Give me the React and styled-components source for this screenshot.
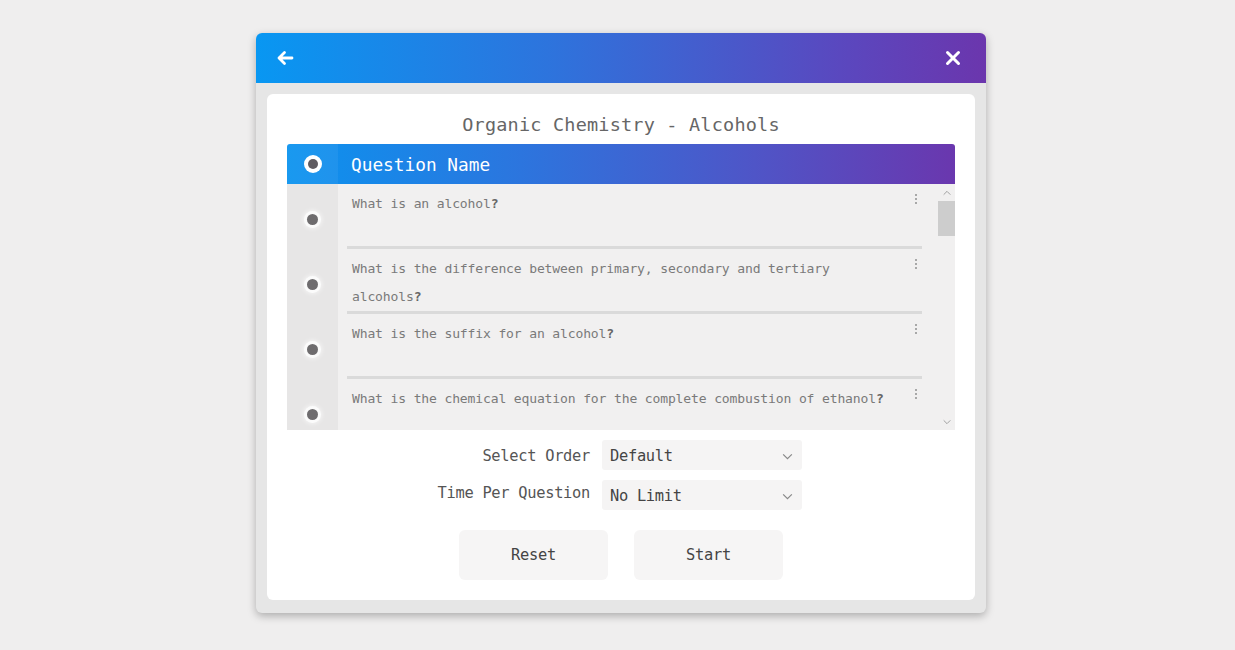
import React from "react";
import styled, { createGlobalStyle } from "styled-components";

const Global = createGlobalStyle`
  html, body { margin: 0; padding: 0; background: #efeeee; }
  body { font-family: "DejaVu Sans Mono", "Liberation Mono", monospace; }
  * { box-sizing: border-box; }
`;

const Page = styled.div`
  width: 1235px;
  height: 650px;
  display: flex;
  justify-content: center;
  padding: 33px 0 0 7px;
`;

const Window = styled.div`
  width: 730px;
  height: 580px;
  background: #e6e6e6;
  border-radius: 6px;
  box-shadow: 0 3px 8px rgba(0,0,0,0.28);
  display: flex;
  flex-direction: column;
  overflow: hidden;
`;

const TitleBar = styled.div`
  height: 50px;
  flex: none;
  background: linear-gradient(90deg, #0897f2 0%, #2d74dd 40%, #5a48bf 80%, #6b36ad 100%);
  display: flex;
  align-items: center;
  justify-content: space-between;
  padding: 0 23px 0 19px;
`;

const IconButton = styled.button`
  border: none;
  background: none;
  padding: 0;
  width: 20px;
  height: 20px;
  display: flex;
  align-items: center;
  justify-content: center;
  color: #fff;
`;

const Body = styled.div`
  flex: 1;
  padding: 11px 11px 13px 11px;
  display: flex;
`;

const Card = styled.div`
  flex: 1;
  background: #fff;
  border-radius: 6px;
  padding: 16px 20px 20px 20px;
  display: flex;
  flex-direction: column;
  align-items: stretch;
`;

const Heading = styled.h1`
  margin: 0;
  height: 34px;
  font-size: 18.5px;
  font-weight: normal;
  color: #666;
  text-align: center;
  line-height: 30px;
  letter-spacing: 0.2px;
`;

const Table = styled.div`
  display: flex;
  flex-direction: column;
`;

const HeaderRow = styled.div`
  height: 40px;
  display: flex;
  background: linear-gradient(90deg, #0b93ef 0%, #2c75de 35%, #4f55c7 70%, #6a37ae 100%);
  border-radius: 3px 3px 0 0;
`;

const HeaderMark = styled.div`
  width: 51px;
  flex: none;
  display: flex;
  align-items: center;
  justify-content: center;
  background: rgba(255,255,255,0.06);
`;

const HeaderRadio = styled.span`
  width: 18px;
  height: 18px;
  border-radius: 50%;
  background: #fff;
  display: flex;
  align-items: center;
  justify-content: center;
  &::after {
    content: "";
    width: 10px;
    height: 10px;
    border-radius: 50%;
    background: #5f5b60;
  }
`;

const HeaderText = styled.div`
  flex: 1;
  padding-left: 13px;
  display: flex;
  align-items: center;
  color: #fff;
  font-size: 17.8px;
`;

const ListArea = styled.div`
  height: 246px;
  display: flex;
  background: #f1f0f0;
  overflow: hidden;
`;

const MarkColumn = styled.div`
  width: 51px;
  flex: none;
  background: #e7e6e6;
  display: flex;
  flex-direction: column;
`;

const MarkCell = styled.div`
  height: 65px;
  flex: none;
  display: flex;
  align-items: center;
  justify-content: center;
  padding-top: 6px;
`;

const Dot = styled.span`
  width: 11px;
  height: 11px;
  border-radius: 50%;
  background: #6e6c6e;
  box-shadow: 0 0 0 3px #fbfbfb, 0 0 4px 4px rgba(255,255,255,0.6);
`;

const Rows = styled.div`
  flex: 1;
  padding: 0 16px 0 9px;
  display: flex;
  flex-direction: column;
`;

const Row = styled.div`
  height: 65px;
  flex: none;
  display: flex;
  align-items: flex-start;
  padding: 13px 0 0 5px;
  border-bottom: 3px solid #dadada;
  &:last-child { border-bottom: none; }
`;

const RowText = styled.div`
  flex: 1;
  font-size: 13.05px;
  line-height: 28px;
  margin-top: -7px;
  padding-right: 12px;
  color: #7a7a7a;
  letter-spacing: -0.15px;
  b { font-weight: bold; color: #666; }
`;

const Kebab = styled.div`
  width: 10px;
  margin-right: 1px;
  margin-top: -4px;
  display: flex;
  flex-direction: column;
  align-items: center;
  gap: 2px;
  padding-top: 1px;
  span {
    width: 2px;
    height: 2px;
    background: #a8a8a8;
  }
`;

const Scrollbar = styled.div`
  width: 17px;
  flex: none;
  display: flex;
  flex-direction: column;
  align-items: stretch;
  background: #f1f0f0;
`;

const ScrollArrow = styled.div`
  height: 17px;
  display: flex;
  align-items: center;
  justify-content: center;
  color: #9a9a9a;
`;

const Thumb = styled.div`
  height: 35px;
  background: #cdcdcd;
`;

const Spacer = styled.div`
  flex: 1;
`;

const Form = styled.div`
  display: grid;
  grid-template-columns: 303px 200px 1fr;
  column-gap: 12px;
  row-gap: 10px;
  margin-top: 10px;
  align-items: center;
`;

const Label = styled.label`
  grid-column: 1;
  text-align: right;
  font-size: 15.4px;
  color: #555;
  letter-spacing: -0.3px;
  transform: translateY(${p => p.$shift || 0}px);
`;

const Select = styled.div`
  grid-column: 2;
  height: 30px;
  background: #f5f4f4;
  border-radius: 3px;
  display: flex;
  align-items: center;
  justify-content: space-between;
  padding: 2px 8px 0 8px;
  font-size: 15.4px;
  color: #444;
  letter-spacing: -0.3px;
`;

const Buttons = styled.div`
  display: flex;
  justify-content: center;
  gap: 26px;
  margin-top: 20px;
`;

const Button = styled.button`
  width: 149px;
  height: 50px;
  border: none;
  border-radius: 6px;
  background: #f6f5f5;
  font-family: inherit;
  font-size: 15.4px;
  color: #444;
  letter-spacing: -0.3px;
`;

const Chevron = ({ up, size = 12, color = "#999" }) => (
  <svg width={size} height={size} viewBox="0 0 12 12" fill="none">
    <path d={up ? "M2 8 L6 4 L10 8" : "M2 4 L6 8 L10 4"} stroke={color} strokeWidth="1.1" />
  </svg>
);

const questions = [
  "What is an alcohol",
  "What is the difference between primary, secondary and tertiary alcohols",
  "What is the suffix for an alcohol",
  "What is the chemical equation for the complete combustion of ethanol",
];

export default function App() {
  return (
    <>
      <Global />
      <Page>
        <Window>
          <TitleBar>
            <IconButton aria-label="back">
              <svg width="18" height="16" viewBox="0 0 18 16" fill="none">
                <path d="M16 8 H3 M8.5 2.5 L3 8 L8.5 13.5" stroke="#fff" strokeWidth="2.8" strokeLinecap="round" strokeLinejoin="round" />
              </svg>
            </IconButton>
            <IconButton aria-label="close">
              <svg width="16" height="16" viewBox="0 0 16 16" fill="none">
                <path d="M2.5 2.5 L13.5 13.5 M13.5 2.5 L2.5 13.5" stroke="#fff" strokeWidth="3" strokeLinecap="round" />
              </svg>
            </IconButton>
          </TitleBar>
          <Body>
            <Card>
              <Heading>Organic Chemistry - Alcohols</Heading>
              <Table>
                <HeaderRow>
                  <HeaderMark><HeaderRadio /></HeaderMark>
                  <HeaderText>Question Name</HeaderText>
                </HeaderRow>
                <ListArea>
                  <MarkColumn>
                    {questions.map((q, i) => (
                      <MarkCell key={i}><Dot /></MarkCell>
                    ))}
                  </MarkColumn>
                  <Rows>
                    {questions.map((q, i) => (
                      <Row key={i}>
                        <RowText>{q}<b>?</b></RowText>
                        <Kebab><span /><span /><span /></Kebab>
                      </Row>
                    ))}
                  </Rows>
                  <Scrollbar>
                    <ScrollArrow><Chevron up size={10} /></ScrollArrow>
                    <Thumb />
                    <Spacer />
                    <ScrollArrow><Chevron size={10} /></ScrollArrow>
                  </Scrollbar>
                </ListArea>
              </Table>
              <Form>
                <Label $shift={1}>Select Order</Label>
                <Select>Default<Chevron size={13} color="#888" /></Select>
                <Label $shift={-2}>Time Per Question</Label>
                <Select>No Limit<Chevron size={13} color="#888" /></Select>
              </Form>
              <Buttons>
                <Button>Reset</Button>
                <Button>Start</Button>
              </Buttons>
            </Card>
          </Body>
        </Window>
      </Page>
    </>
  );
}
